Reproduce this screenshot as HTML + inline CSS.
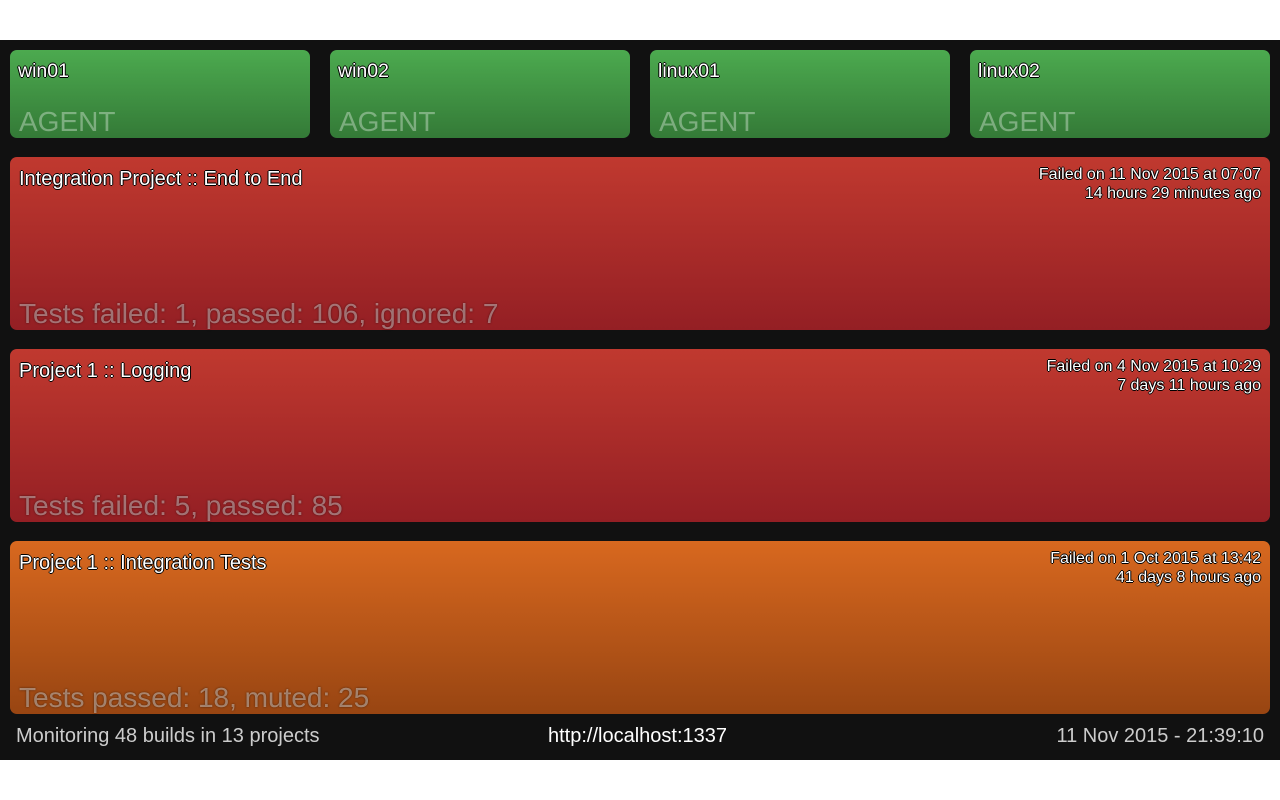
<!DOCTYPE html><html><head><style>
body{margin:0;width:1280px;height:800px;background:#fff;font-family:"Liberation Sans",sans-serif;position:relative;overflow:hidden}
.bg{position:absolute;left:0;top:40px;width:1280px;height:720px;background:#111}
.t{position:absolute;border-radius:7px;box-sizing:border-box}
.g{background:linear-gradient(#4caa4f,#347a37);top:50px;height:88px;width:300px}
.r{background:linear-gradient(#c0392f,#941f24);left:10px;width:1260px;height:173px}
.o{background:linear-gradient(#d8681f,#984512);left:10px;width:1260px;height:173px}
.sh{color:#fff;text-shadow:-1px 0 #000,1px 0 #000,0 -1px #000,0 1px #000}
.n{position:absolute;left:8px;top:10px;font-size:19.5px}
.a{position:absolute;left:9px;bottom:0px;font-size:28px;color:rgba(255,255,255,.35)}
.ti{position:absolute;left:9px;top:11px;font-size:20px}
.rt{position:absolute;right:9px;top:8px;font-size:16px;text-align:right;line-height:19px}
.st{position:absolute;left:9px;bottom:0px;font-size:28px;color:rgba(255,255,255,.4);text-shadow:0 0 2px rgba(0,0,0,.5)}
.f{position:absolute;top:725px;font-size:20px;color:#ccc}
</style></head><body>
<div class="bg"></div>
<div class="t g" style="left:10px"><div class="n sh">win01</div><div class="a">AGENT</div></div>
<div class="t g" style="left:330px"><div class="n sh">win02</div><div class="a">AGENT</div></div>
<div class="t g" style="left:650px"><div class="n sh">linux01</div><div class="a">AGENT</div></div>
<div class="t g" style="left:970px"><div class="n sh">linux02</div><div class="a">AGENT</div></div>
<div class="t r" style="top:157px"><div class="ti sh">Integration Project :: End to End</div><div class="rt sh">Failed on 11 Nov 2015 at 07:07<br>14 hours 29 minutes ago</div><div class="st">Tests failed: 1, passed: 106, ignored: 7</div></div>
<div class="t r" style="top:349px"><div class="ti sh">Project 1 :: Logging</div><div class="rt sh">Failed on 4 Nov 2015 at 10:29<br>7 days 11 hours ago</div><div class="st">Tests failed: 5, passed: 85</div></div>
<div class="t o" style="top:541px"><div class="ti sh">Project 1 :: Integration Tests</div><div class="rt sh">Failed on 1 Oct 2015 at 13:42<br>41 days 8 hours ago</div><div class="st">Tests passed: 18, muted: 25</div></div>
<div class="f" style="left:16px">Monitoring 48 builds in 13 projects</div>
<div class="f" style="left:548px;color:#fff">http://localhost:1337</div>
<div class="f" style="right:16px">11 Nov 2015 - 21:39:10</div>
</body></html>
